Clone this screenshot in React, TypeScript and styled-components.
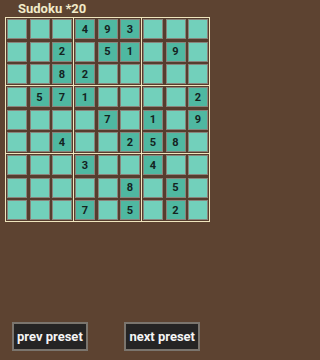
import React from 'react'
import styled, { createGlobalStyle } from 'styled-components'

const GlobalStyle = createGlobalStyle`
  html, body {
    margin: 0;
    padding: 0;
    background: #5d4331;
  }
`

const Screen = styled.div`
  display: flex;
  flex-direction: column;
  width: 216px;
  height: 360px;
  padding-left: 5px;
  box-sizing: border-box;
  font-family: Roboto, 'Liberation Sans', sans-serif;
`

const Title = styled.div`
  padding: 1px 0 0 13px;
  height: 16px;
  line-height: 16px;
  font-size: 13px;
  font-weight: bold;
  color: #f2ebc9;
`

const Board = styled.div`
  display: grid;
  grid-template-columns: repeat(3, 67px);
  gap: 1px;
  padding: 1px;
  width: max-content;
  background: #efe5bd;
`

const Box = styled.div`
  display: grid;
  grid-template-columns: repeat(3, 20px);
  grid-auto-rows: 20px;
  gap: 2.5px;
  padding: 1px;
  background: #563d2e;
`

const Cell = styled.div<{ $given: boolean }>`
  box-sizing: border-box;
  display: flex;
  align-items: center;
  justify-content: center;
  border: 1.5px solid #8a847b;
  background: ${(p) => (p.$given ? '#4fb8a1' : '#72d0bb')};
  color: #14231f;
  font-size: 11px;
  font-weight: bold;
`

const Spacer = styled.div`
  flex: 1;
`

const ButtonRow = styled.div`
  display: flex;
  justify-content: space-between;
  padding: 0 16px 9px 7px;
`

const PresetButton = styled.button`
  height: 29px;
  padding: 0 3px;
  border: 2px solid #7b756e;
  background: #252424;
  color: #f4f4f4;
  font-family: Roboto, 'Liberation Sans', sans-serif;
  font-size: 13px;
  font-weight: bold;
  cursor: pointer;
`

const puzzle =
  '000493000' +
  '002051090' +
  '008200000' +
  '057100002' +
  '000070109' +
  '004002580' +
  '000300400' +
  '000008050' +
  '000705020'

const digitAt = (row: number, col: number) => puzzle[row * 9 + col]

const SudokuBox: React.FC<{ boxRow: number; boxCol: number }> = ({ boxRow, boxCol }) => {
  const cells = []
  for (let r = 0; r < 3; r++) {
    for (let c = 0; c < 3; c++) {
      const d = digitAt(boxRow * 3 + r, boxCol * 3 + c)
      const given = d !== '0'
      cells.push(
        <Cell key={`${r}-${c}`} $given={given}>
          {given ? d : ''}
        </Cell>
      )
    }
  }
  return <Box>{cells}</Box>
}

export default function App() {
  const boxes = []
  for (let br = 0; br < 3; br++) {
    for (let bc = 0; bc < 3; bc++) {
      boxes.push(<SudokuBox key={`${br}-${bc}`} boxRow={br} boxCol={bc} />)
    }
  }

  return (
    <>
      <GlobalStyle />
      <Screen>
        <Title>Sudoku *20</Title>
        <Board>{boxes}</Board>
        <Spacer />
        <ButtonRow>
          <PresetButton>prev preset</PresetButton>
          <PresetButton>next preset</PresetButton>
        </ButtonRow>
      </Screen>
    </>
  )
}
